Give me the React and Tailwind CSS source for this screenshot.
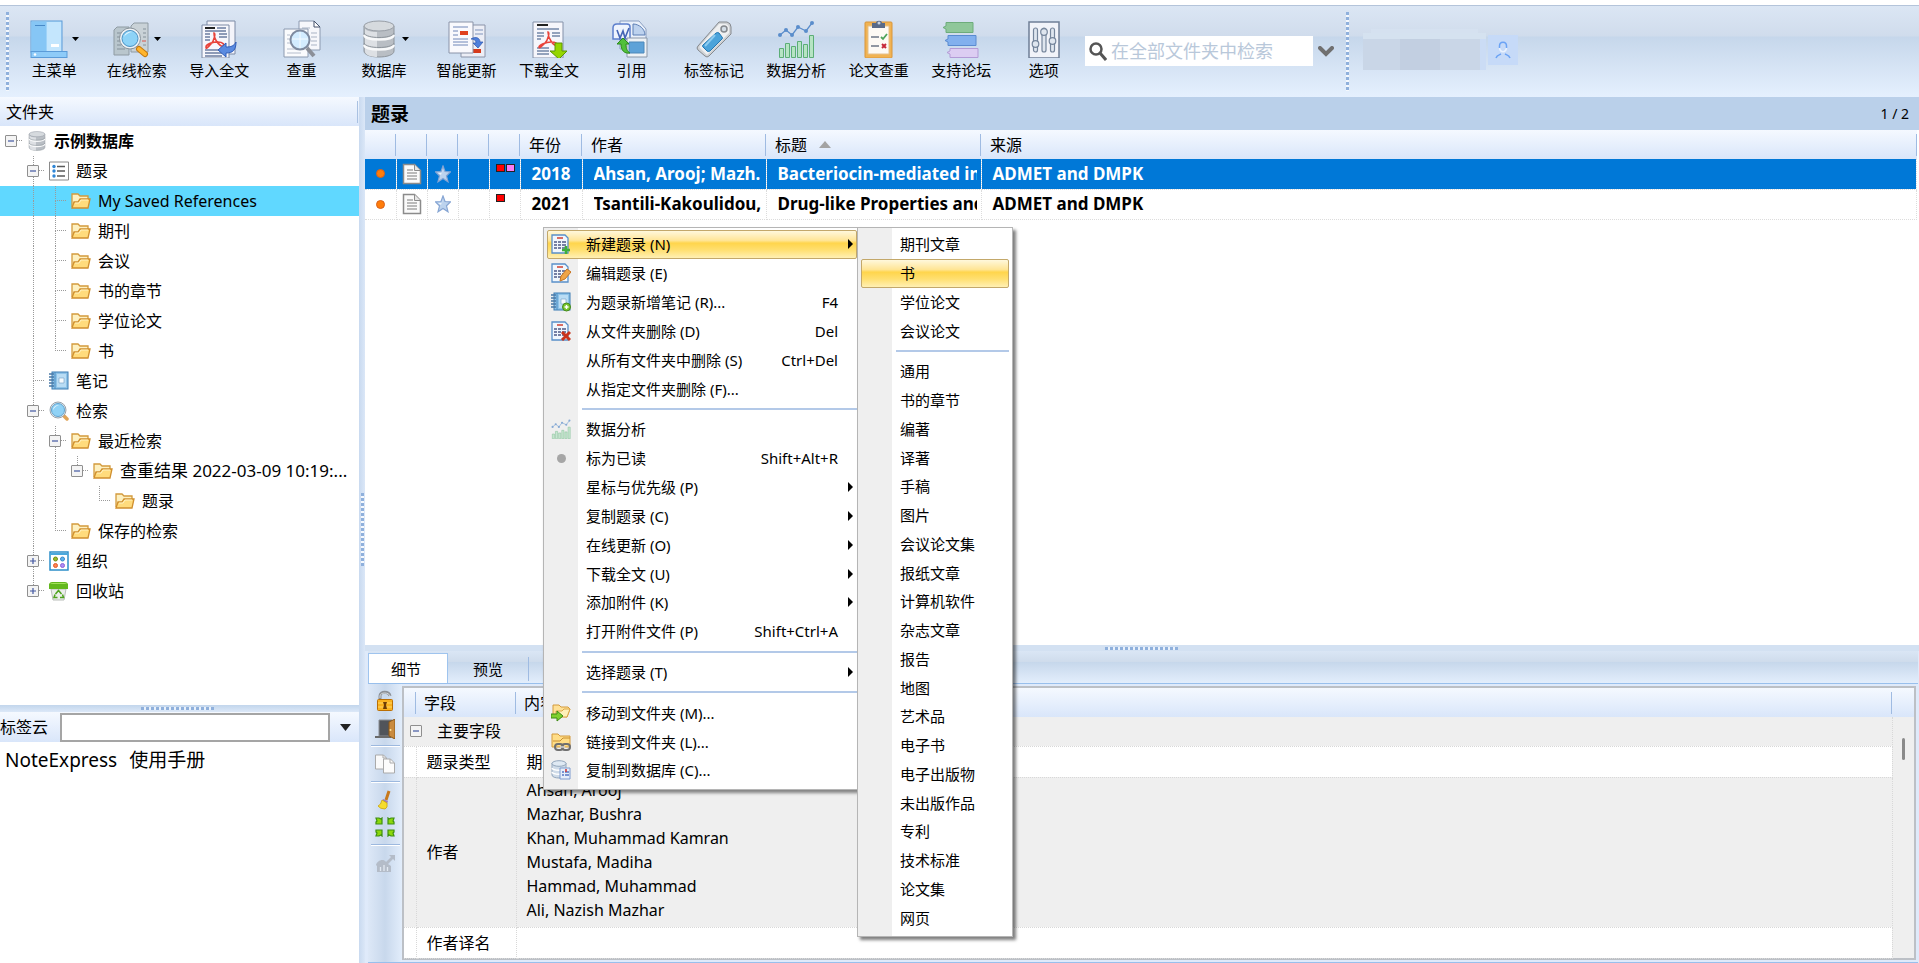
import React, { useState } from 'react';
import clsx from 'clsx';

/* ---------- toolbar icons (38 x 38) ---------- */

const MainMenuIcon = () => (
  <svg width="38" height="38" viewBox="0 0 38 38">
    <rect x="1" y="1" width="31" height="31" fill="#b9e0fb" stroke="#5b9bd8" />
    <rect x="1.500" y="1.500" width="15" height="30" fill="#86c6f5" />
    <rect x="17" y="2" width="14" height="29" fill="#c4e6fd" />
    <path d="M5 5.500h10" stroke="#4889c7" />
    <rect x="21" y="24" width="8" height="3" fill="#fff" />
    <rect x="1" y="31.500" width="36" height="6" fill="#8ecbf8" stroke="#5b9bd8" />
    <circle cx="5" cy="34.500" r="1.300" fill="#fff" />
  </svg>
);

const OnlineSearchIcon = () => (
  <svg width="38" height="38" viewBox="0 0 38 38">
    <path d="M2 10l3-3h12v28H2z" fill="#b9c6cd" stroke="#8f9ba3" />
    <path d="M19 6l3-3h14v29H19z" fill="#c9d2d7" stroke="#8f9ba3" />
    <path d="M5 13h4M5 17h3M5 21h3M5 25h4M5 29h8M31 9h3M31 13h3M31 17h3M31 25h3" stroke="#84919a" />
    <path d="M30 21h4" stroke="#d9534a" />
    <circle cx="18" cy="18.500" r="10.500" fill="#eef2f5" stroke="#8a949c" />
    <circle cx="18" cy="18.500" r="8" fill="#8dd3f7" stroke="#4b91c3" />
    <path d="M12 17a7 7 0 0 1 9-5c-4 0-7 2-9 5z" fill="#fff" opacity=".8" />
    <path d="M27 29l6 5" stroke="#c47a10" strokeWidth="6" strokeLinecap="round" />
    <path d="M27 29l6 5" stroke="#ffb52e" strokeWidth="4" strokeLinecap="round" />
  </svg>
);

const ImportPdfIcon = () => (
  <svg width="38" height="38" viewBox="0 0 38 38">
    <path d="M7 1h28v33H7z" fill="#f4f4fa" stroke="#7c8aa5" />
    <path d="M2 5h27v33H2z" fill="#f7f7fc" stroke="#7c8aa5" />
    <path d="M5 8h10" stroke="#222" strokeWidth="2" />
    <path d="M17 8h9M5 14h5M5 17h5M5 20h5M19 14h8M19 17h8M5 33h17M5 36h17M5 30h13M5 11h21" stroke="#6c7da0" strokeWidth="1.300" />
    <path d="M14 13c2 0 0 8-3 11s-5 6-5 3 7-5 12-5 7 3 5 4-9-5-9-13z" fill="none" stroke="#e8433a" strokeWidth="1.600" />
    <path d="M18 30l8-7v4c5 0 8-1 10-5 0 8-3 11-10 11v4z" fill="#5b8be0" stroke="#2f5cb8" />
  </svg>
);

const CheckDupIcon = () => (
  <svg width="38" height="38" viewBox="0 0 38 38">
    <path d="M16 1h15l6 6v23H16z" fill="#f6f7fb" stroke="#8c9ab0" />
    <path d="M31 1v6h6z" fill="#fff" stroke="#44516b" />
    <path d="M19 8h8M28 13h6M28 17h6M28 21h6M28 25h6" stroke="#a9b3c4" />
    <path d="M1 9h24v28H1z" fill="#fafbfd" stroke="#8c9ab0" />
    <path d="M4 15h3M4 19h3M4 23h3M4 29h14M4 33h14" stroke="#b5bdcc" />
    <circle cx="17" cy="20" r="9.500" fill="#d3ecff" stroke="#7f8ba0" strokeWidth="2" />
    <path d="M17 12v16M9 19h16" stroke="#fff" opacity=".8" />
    <path d="M24 28l7 8" stroke="#8b8f98" strokeWidth="4" />
  </svg>
);

const DatabaseIcon = ({ size = 38 }) => (
  <svg width={size} height={size} viewBox="0 0 38 38">
    <path d="M4 6v25c0 8 30 8 30 0V6z" fill="#b9bec4" stroke="#8e959c" />
    <path d="M5 8v23c0 6 12 6 12 6V12C9 12 5 10 5 8z" fill="#dde0e4" />
    <path d="M4 15c2 6 28 6 30 0M4 25c2 6 28 6 30 0" fill="none" stroke="#f8f9fa" strokeWidth="2.500" />
    <path d="M4 13c2 6 28 6 30 0M4 23c2 6 28 6 30 0" fill="none" stroke="#8e959c" />
    <ellipse cx="19" cy="6" rx="15" ry="5" fill="#d6dade" stroke="#989ea6" />
  </svg>
);

const SmartUpdateIcon = () => (
  <svg width="38" height="38" viewBox="0 0 38 38">
    <path d="M13 5h24v32H13z" fill="#eceef6" stroke="#8a93a8" />
    <path d="M27 10h8M27 14h8M16 30h8" stroke="#7f93bb" />
    <path d="M25 29h8v4h-8z" fill="#d63a1c" />
    <path d="M1 2h24v31H1z" fill="#f9f9fd" stroke="#8a93a8" />
    <path d="M5 7h15M5 11h5M5 15h5M5 19h15M5 22h15M5 25h15" stroke="#6e86b8" />
    <path d="M12 11h8v4h-8z" fill="#e0401e" />
    <path d="M23 19c5-3 9-1 9 3h3l-5 6-5-5h3c0-3-2-4-5-4z" fill="#4f80dc" stroke="#2b55ad" strokeWidth=".700" />
  </svg>
);

const DownloadPdfIcon = () => (
  <svg width="38" height="38" viewBox="0 0 38 38">
    <path d="M3 2h30v36H3z" fill="#f6f6fb" stroke="#8390a8" />
    <path d="M7 5h11" stroke="#222" strokeWidth="2" />
    <path d="M7 9h22M7 13h7M7 16h7M22 13h8M22 16h8M7 19h4M7 31h12M7 34h12M7 28h12" stroke="#7386a8" strokeWidth="1.300" />
    <path d="M18 12c2 0 0 8-3 11s-6 6-6 4 7-5 12-5 7 2 5 3-8-6-8-13z" fill="none" stroke="#e8433a" strokeWidth="1.600" />
    <path d="M25 23h7v8h5l-8 8-9-8h5z" fill="#95d600" stroke="#5b9406" />
  </svg>
);

const CiteIcon = () => (
  <svg width="38" height="38" viewBox="0 0 38 38">
    <path d="M8 1h19l7 8v20H8z" fill="#e9f0fa" stroke="#8b9fc2" />
    <path d="M21 4v11h12c0-6-6-11-12-11z" fill="#bdd2ee" stroke="#5d7fb4" />
    <path d="M1 8q0-4 4-4h10q3 0 3 3v12H1z" fill="#eff4fd" stroke="#5d7fcc" strokeWidth="1.500" />
    <path d="M5 10l3 8 3-7 2 7 4-10" fill="none" stroke="#4565b5" strokeWidth="1.600" />
    <path d="M15 18h20v19H15z" fill="#eef2f6" stroke="#8a97a8" />
    <path d="M17 22h15v11H17z" fill="#5ea2d8" stroke="#4d88ba" />
    <path d="M5 24l6-6 6 6h-3c0 5 1 7 4 9-6 1-9-3-9-9z" fill="#52c03a" stroke="#2d8c1c" />
  </svg>
);

const TagIcon = () => (
  <svg width="38" height="38" viewBox="0 0 38 38">
    <path d="M24 2h8q4 1 4 5v7L14 36q-2 2-4 0l-7-6q-2-2 0-4z" fill="#cfd2d5" stroke="#85898e" />
    <path d="M24 4h7q3 1 3 4v5L13 34q-1 1-2 0l-6-6q-1-1 0-2z" fill="#eff0f1" />
    <circle cx="29" cy="9" r="3" fill="#d3dde6" stroke="#85898e" strokeWidth="1.500" />
    <path d="M21 13q2-1 3 0l3 4q1 1 0 2L15 31q-2 1-3 0l-4-4q-1-1 0-2z" fill="#4ba3da" stroke="#2378b4" />
    <path d="M20 15L10 26" stroke="#8dccf0" strokeWidth="2" />
  </svg>
);

const AnalysisIcon = ({ size = 38 }) => (
  <svg width={size} height={size} viewBox="0 0 38 38">
    <path d="M3 15l6-5 6 5 6-8 8 4 6-8" fill="none" stroke="#5a8dcb" strokeWidth="1.300" />
    <g fill="#5a8dcb">
      <circle cx="3" cy="15" r="2" /><circle cx="9" cy="10" r="2" /><circle cx="15" cy="15" r="2" />
      <circle cx="21" cy="7" r="2" /><circle cx="29" cy="11" r="2" /><circle cx="35" cy="3" r="2" />
    </g>
    <g fill="#b6e4c3" stroke="#5cae77">
      <path d="M2.500 28.500h4v9h-4zM8.500 23.500h4v14h-4zM14.500 26.500h4v11h-4zM20.500 21.500h4v16h-4zM26.500 24.500h4v13h-4zM32.500 15.500h4v22h-4z" />
    </g>
  </svg>
);

const ClipboardIcon = () => (
  <svg width="38" height="38" viewBox="0 0 38 38">
    <rect x="5" y="2" width="27" height="36" rx="1" fill="#f1b352" stroke="#d8953a" />
    <path d="M8 6h21v28H8z" fill="#fdfaf5" stroke="#e5c08a" />
    <path d="M12 3h4c0-3 6-3 6 0h3v5H12z" fill="#5a6b88" />
    <circle cx="19" cy="3" r="1.500" fill="#c9d3e2" />
    <path d="M11 17h8M11 26h8" stroke="#6c7787" strokeWidth="1.500" />
    <path d="M21 17l2 2 4-5" fill="none" stroke="#4da35c" strokeWidth="1.800" />
    <path d="M22 24l4 4M26 24l-4 4" stroke="#c6283a" strokeWidth="2" />
  </svg>
);

const ForumIcon = () => (
  <svg width="38" height="38" viewBox="0 0 38 38">
    <path d="M4 2.500h27v10H4V9L1 7.500 4 6z" fill="#8fc79a" stroke="#6dac7b" />
    <path d="M6 15.500h28v10H6V22l-3-1.500L6 19z" fill="#82b0ee" stroke="#5a8bd0" />
    <path d="M8 28.500h28v9H8V34l-3-1.500L8 31z" fill="#dccdf2" stroke="#b39bd6" />
  </svg>
);

const OptionsIcon = () => (
  <svg width="38" height="38" viewBox="0 0 38 38">
    <path d="M4 2h30v36H4z" fill="#f1f3f9" stroke="#6f7f96" strokeWidth="1.500" />
    <g fill="#dfe6ef" stroke="#76869c" strokeWidth="1.200">
      <rect x="8.500" y="8" width="4" height="24" rx="2" />
      <rect x="17" y="8" width="4" height="24" rx="2" />
      <rect x="25.500" y="8" width="4" height="24" rx="2" />
      <circle cx="10.500" cy="24" r="3.300" /><circle cx="19" cy="12" r="3.300" /><circle cx="27.500" cy="21" r="3.300" />
    </g>
  </svg>
);

/* ---------- small icons (20 x 20) ---------- */

const FolderIcon = () => (
  <svg width="20" height="18" viewBox="0 0 20 18">
    <path d="M1 15V2h6l2 2h8v4" fill="#fdf0c0" stroke="#d39a3c" strokeWidth="1.300" />
    <path d="M1 16l2-6h4l2-3h10l-2 9z" fill="#ffdb7c" stroke="#d08f2e" strokeWidth="1.300" />
    <path d="M4 11h4l2-3h7" fill="none" stroke="#fff3c4" />
  </svg>
);

const ListIcon = () => (
  <svg width="20" height="20" viewBox="0 0 20 20">
    <path d="M.5 1h19v18H.5z" fill="#fff" stroke="#8a8a8a" />
    <path d="M8 5.500h8M8 10h8M8 15h8" stroke="#5a5a5a" strokeWidth="1.300" />
    <circle cx="5" cy="5.500" r="1.700" fill="#2f86d6" /><circle cx="5" cy="10" r="1.700" fill="#2f86d6" /><circle cx="5" cy="15" r="1.700" fill="#2f86d6" />
  </svg>
);

const NotebookIcon = ({ add }) => (
  <svg width="20" height="20" viewBox="0 0 20 20">
    <rect x="3" y="1" width="16" height="17" fill="#8fc3e8" stroke="#3d7cb3" />
    <path d="M6 1v17" stroke="#4b8dc2" />
    <path d="M0 3h5M0 6h5M0 9h5M0 12h5M0 15h5" stroke="#4a7aa6" strokeWidth="1.300" />
    <path d="M8 3h9v13H8z" fill="#b9dcf4" />
    <path d="M10 7h5v5h-5z" fill="#f6fafd" stroke="#6f9fc6" strokeWidth=".600" />
    {add && <circle cx="15.500" cy="15" r="4" fill="#79c62e" stroke="#44891a" />}
    {add && <path d="M13.500 15h4M15.500 13v4" stroke="#fff" strokeWidth="1.400" />}
  </svg>
);

const SearchFolderIcon = () => (
  <svg width="20" height="20" viewBox="0 0 20 20">
    <path d="M14 14l4 4" stroke="#e0a458" strokeWidth="3.500" strokeLinecap="round" />
    <circle cx="9" cy="9" r="8" fill="#e3e8ec" stroke="#98a2ab" />
    <circle cx="9" cy="9" r="6.500" fill="#8fd2f6" stroke="#5fa3cf" />
    <path d="M4 9c0-3 3-5 6-5-3 1-4 2-6 5z" fill="#fff" opacity=".8" />
  </svg>
);

const GroupIcon = () => (
  <svg width="20" height="20" viewBox="0 0 20 20">
    <path d="M1 1h18v18H1z" fill="#fff" stroke="#2d8fc9" strokeWidth="1.500" />
    <path d="M1 3h18" stroke="#4aa8dc" strokeWidth="2" />
    <circle cx="6.500" cy="8" r="2" fill="#9bbb2c" stroke="#6f8c14" /><circle cx="13.500" cy="8" r="2" fill="#5cb2ee" stroke="#3a88c8" />
    <circle cx="6.500" cy="14.500" r="2" fill="#ff8150" stroke="#dd5a2a" /><circle cx="13.500" cy="14.500" r="2" fill="#b08cf5" stroke="#8a64d8" />
  </svg>
);

const TrashIcon = () => (
  <svg width="20" height="20" viewBox="0 0 20 20">
    <path d="M2 8h15l-2 11H4z" fill="#eceeec" stroke="#b9bdb9" />
    <path d="M0 8V3q1-2 3-2h13q2 0 3 2v5z" fill="#63b81e" />
    <path d="M1 3q1-1 3-1h11q2 0 3 1z" fill="#a3e05c" />
    <path d="M6.500 13l3-3.500L12.500 13M6 13.500l-1 3h3.500M13.500 13.500l1 3H11" fill="none" stroke="#4fa31d" strokeWidth="1.500" />
  </svg>
);

const DocIcon = () => (
  <svg width="20" height="22" viewBox="0 0 20 22">
    <path d="M1.500 1.500h11l6 6v13h-17z" fill="#fafafa" stroke="#8b8b8b" strokeWidth="1.500" />
    <path d="M5 7h6M5 10h10M5 13h10M5 16h10" stroke="#a5a5a5" strokeWidth="1.300" />
    <path d="M12.500 1.500v6h6" fill="#e5e5e5" stroke="#8b8b8b" />
  </svg>
);

const StarIcon = () => (
  <svg width="16" height="18" viewBox="0 0 16 18">
    <path d="M8 1l2 5.500 5.500.300-4 4 1.500 6L8 13.500 3 16.800l1.500-6-4-4L6 6.500z" fill="#bcd3ee" stroke="#86a5d3" strokeWidth="1.200" />
    <path d="M8 4l-1 4-4 0 3 2z" fill="#fff" opacity=".7" />
  </svg>
);

const RefIcon = ({ kind }) => (
  <svg width="20" height="20" viewBox="0 0 20 20">
    <path d="M1 1h13l3 3v15H1z" fill="#f1f7fd" stroke="#5990c9" strokeWidth="1.300" />
    <path d="M6 4h6" stroke="#d44a3c" strokeWidth="1.600" />
    <path d="M3 8h3M7 8h3M11 8h4M3 11h3M7 11h3M11 11h4M3 14h3M7 14h3M11 14h3" stroke="#4d5a86" strokeWidth="1.600" />
    {kind === 'add' && <path d="M15 12v8M11 16h8" stroke="#3faf3a" strokeWidth="2.600" />}
    {kind === 'edit' && <path d="M9 18l1-5 6-7 4 3-6 7z" fill="#f0a548" stroke="#c77422" />}
    {kind === 'del' && <path d="M11 11l8 8M19 11l-8 8" stroke="#c9341c" strokeWidth="3" />}
  </svg>
);

const MoveFolderIcon = () => (
  <svg width="20" height="20" viewBox="0 0 20 20">
    <path d="M2 13V2h6l2 2h7l2 2-3 8z" fill="#ffe196" stroke="#d39a3c" />
    <path d="M5 8h6l2-2h6l-3 8H5z" fill="#fff0b8" stroke="#dba648" />
    <path d="M0 11h6V8l6 5-6 5v-3H0z" fill="#7ed02e" stroke="#3c8a12" />
  </svg>
);

const LinkFolderIcon = () => (
  <svg width="20" height="20" viewBox="0 0 20 20">
    <path d="M1 15V2h6l2 2h10v11z" fill="#ffdd86" stroke="#d39a3c" />
    <path d="M2 9h7l3-3h7" fill="none" stroke="#c98f30" />
    <rect x="4" y="12" width="8" height="6" rx="3" fill="none" stroke="#6f6f6f" strokeWidth="2" />
    <rect x="11" y="12" width="8" height="6" rx="3" fill="none" stroke="#6f6f6f" strokeWidth="2" />
    <path d="M9 15h5" stroke="#d5d5d5" strokeWidth="1.500" />
  </svg>
);

const CopyDbIcon = () => (
  <svg width="20" height="20" viewBox="0 0 20 20">
    <path d="M1 3v12c0 4 14 4 14 0V3z" fill="#cfdbe8" stroke="#93a7bd" />
    <path d="M1 8c1 3 13 3 14 0M1 12c1 3 13 3 14 0" fill="none" stroke="#fff" strokeWidth="1.500" />
    <ellipse cx="8" cy="3.500" rx="7" ry="2.800" fill="#dfe9f3" stroke="#93a7bd" />
    <path d="M9 8h10v11H9z" fill="#e6eefa" stroke="#7f9cd0" />
    <path d="M11 12h2M14 12h4M11 15h2M14 15h4" stroke="#5677c4" strokeWidth="1.600" />
    <path d="M15 9v3" stroke="#d03a3a" strokeWidth="1.600" />
  </svg>
);

/* ---------- detail side bar icons (20 x 20) ---------- */

const LockIcon = () => (
  <svg width="20" height="22" viewBox="0 0 20 22">
    <path d="M5 9V6c0-5 9-5 10 0" fill="none" stroke="#8b9097" strokeWidth="3" />
    <path d="M5 8V6c0-4 9-4 10 0" fill="none" stroke="#d6dade" />
    <rect x="2.500" y="9.500" width="15" height="11" rx="1" fill="#f9b11e" stroke="#ba6f05" />
    <path d="M3 13h14M3 17h14" stroke="#ffd765" />
    <path d="M8 12h4l-1 3 1 4H8l1-4z" fill="#6d3c05" />
  </svg>
);

const DoorIcon = () => (
  <svg width="20" height="20" viewBox="0 0 20 20">
    <path d="M4 1h13v16H4z" fill="#50545a" stroke="#8a8d92" />
    <path d="M0 18h16" stroke="#6a6a6a" strokeWidth="2" />
    <path d="M14 3l6-3v20l-6-3z" fill="#c98b3f" stroke="#8a5717" />
    <circle cx="15.500" cy="11" r="1" fill="#ffe49a" />
  </svg>
);

const CopyIcon = () => (
  <svg width="20" height="20" viewBox="0 0 20 20">
    <path d="M.500 1h8l3 3v11H.5z" fill="#fafafa" stroke="#aaa" />
    <path d="M8.500 5h7l4 4v10h-11z" fill="#fcfcfc" stroke="#aaa" />
    <path d="M8 1v3h3M15 5v4h4" fill="none" stroke="#aaa" />
  </svg>
);

const BroomIcon = () => (
  <svg width="20" height="20" viewBox="0 0 20 20">
    <path d="M14 1l-3 9" stroke="#c8791c" strokeWidth="3" />
    <path d="M8 9l5 2-1 3-5-2z" fill="#9c7bc0" />
    <path d="M7 10l5 3q1 5-2 6-5 0-7-3 3-1 4-6z" fill="#f6dc2e" stroke="#caa50c" strokeWidth=".800" />
  </svg>
);

const CompressIcon = () => (
  <svg width="20" height="20" viewBox="0 0 20 20">
    <g fill="#8bd80c" stroke="#3f8f12" strokeWidth="1.200">
      <path d="M1 1h3l2 1 1-1v6H1V5l1-1zM19 1h-3l-2 1-1-1v6h6V5l-1-1zM1 19h3l2-1 1 1v-6H1v2l1 1zM19 19h-3l-2-1-1 1v-6h6v2l-1 1z" />
    </g>
  </svg>
);

const TrendIcon = () => (
  <svg width="20" height="20" viewBox="0 0 20 20">
    <path d="M1 12c1-4 7-7 10-3l5-5-2-2h6v6l-2-2-5 5 3 2v6H2v-6z" fill="#b4bcc8" />
    <path d="M5.500 14v4M9 12v6M12.500 14v4" stroke="#e2e9f2" strokeWidth="1.300" />
  </svg>
);

const Caret = () => (
  <svg width="6" height="12" viewBox="0 0 6 12">
    <path d="M0 1l5 5-5 5z" fill="#000" />
  </svg>
);

/* ---------- data ---------- */

const tools = [
  { label: '主菜单', icon: <MainMenuIcon />, drop: true },
  { label: '在线检索', icon: <OnlineSearchIcon />, drop: true },
  { label: '导入全文', icon: <ImportPdfIcon /> },
  { label: '查重', icon: <CheckDupIcon /> },
  { label: '数据库', icon: <DatabaseIcon />, drop: true },
  { label: '智能更新', icon: <SmartUpdateIcon /> },
  { label: '下载全文', icon: <DownloadPdfIcon /> },
  { label: '引用', icon: <CiteIcon /> },
  { label: '标签标记', icon: <TagIcon /> },
  { label: '数据分析', icon: <AnalysisIcon /> },
  { label: '论文查重', icon: <ClipboardIcon /> },
  { label: '支持论坛', icon: <ForumIcon /> },
  { label: '选项', icon: <OptionsIcon /> },
];

// guides, one letter per level: v line, n blank, t branch, l last branch, h stub
const tree = [
  { label: '示例数据库', icon: <DatabaseIcon size={20} />, guides: 'h', toggle: '-', bold: true },
  { label: '题录', icon: <ListIcon />, guides: 'nt', toggle: '-' },
  { label: 'My Saved References', icon: <FolderIcon />, guides: 'nvt' },
  { label: '期刊', icon: <FolderIcon />, guides: 'nvt' },
  { label: '会议', icon: <FolderIcon />, guides: 'nvt' },
  { label: '书的章节', icon: <FolderIcon />, guides: 'nvt' },
  { label: '学位论文', icon: <FolderIcon />, guides: 'nvt' },
  { label: '书', icon: <FolderIcon />, guides: 'nvl' },
  { label: '笔记', icon: <NotebookIcon />, guides: 'nt' },
  { label: '检索', icon: <SearchFolderIcon />, guides: 'nt', toggle: '-' },
  { label: '最近检索', icon: <FolderIcon />, guides: 'nvt', toggle: '-' },
  { label: '查重结果 2022-03-09 10:19:...', icon: <FolderIcon />, guides: 'nvvl', toggle: '-', large: true },
  { label: '题录', icon: <FolderIcon />, guides: 'nvvnl' },
  { label: '保存的检索', icon: <FolderIcon />, guides: 'nvl' },
  { label: '组织', icon: <GroupIcon />, guides: 'nt', toggle: '+' },
  { label: '回收站', icon: <TrashIcon />, guides: 'nl', toggle: '+' },
];

const refs = [
  { year: '2018', author: 'Ahsan, Arooj; Mazh.', title: 'Bacteriocin-mediated in', source: 'ADMET and DMPK', tags: ['bg-[#ff0000]', 'bg-[#f77cf7]'] },
  { year: '2021', author: 'Tsantili-Kakoulidou,', title: 'Drug-like Properties and', source: 'ADMET and DMPK', tags: ['bg-[#ff0000]'] },
];

const menu = [
  { label: '新建题录 (N)', icon: <RefIcon kind="add" />, sub: true },
  { label: '编辑题录 (E)', icon: <RefIcon kind="edit" /> },
  { label: '为题录新增笔记 (R)...', icon: <NotebookIcon add />, keys: 'F4' },
  { label: '从文件夹删除 (D)', icon: <RefIcon kind="del" />, keys: 'Del' },
  { label: '从所有文件夹中删除 (S)', keys: 'Ctrl+Del' },
  { label: '从指定文件夹删除 (F)...' },
  null,
  { label: '数据分析', icon: <span className="opacity-70"><AnalysisIcon size={20} /></span> },
  { label: '标为已读', icon: <span className="size-[9px] rounded-full bg-[#a6a6a6]" />, keys: 'Shift+Alt+R' },
  { label: '星标与优先级 (P)', sub: true },
  { label: '复制题录 (C)', sub: true },
  { label: '在线更新 (O)', sub: true },
  { label: '下载全文 (U)', sub: true },
  { label: '添加附件 (K)', sub: true },
  { label: '打开附件文件 (P)', keys: 'Shift+Ctrl+A' },
  null,
  { label: '选择题录 (T)', sub: true },
  null,
  { label: '移动到文件夹 (M)...', icon: <MoveFolderIcon /> },
  { label: '链接到文件夹 (L)...', icon: <LinkFolderIcon /> },
  { label: '复制到数据库 (C)...', icon: <CopyDbIcon /> },
];

const subMenu = [
  '期刊文章', '书', '学位论文', '会议论文', null, '通用', '书的章节', '编著', '译著', '手稿', '图片',
  '会议论文集', '报纸文章', '计算机软件', '杂志文章', '报告', '地图', '艺术品', '电子书', '电子出版物',
  '未出版作品', '专利', '技术标准', '论文集', '网页',
].map((label) => (label ? { label } : null));

const authors = ['Ahsan, Arooj', 'Mazhar, Bushra', 'Khan, Muhammad Kamran', 'Mustafa, Madiha', 'Hammad, Muhammad', 'Ali, Nazish Mazhar'];

const headBg = 'bg-linear-to-b from-[#f5f9ff] to-[#d9e6fa]';

/* ---------- pieces ---------- */

function Grip({ vertical }) {
  return vertical ? (
    <span className="w-[3px] bg-[repeating-linear-gradient(180deg,#8fb0dc_0_3px,#f4f8fd_3px_5px)]" />
  ) : (
    <span className="h-[3px] w-[73px] bg-[repeating-linear-gradient(90deg,#8fb0dc_0_3px,#e9f1fb_3px_5px)]" />
  );
}

function Toggle({ sign }) {
  return (
    <button aria-label="toggle" className="flex size-[12px] items-center justify-center rounded-[1px] border border-[#8f8f8f] bg-[#f4f4f4]">
      <svg width="8" height="8" viewBox="0 0 8 8">
        <path d={sign === '+' ? 'M1 4h6M4 1v6' : 'M1 4h6'} stroke="#4257a0" strokeWidth="1.200" />
      </svg>
    </button>
  );
}

function Guide({ kind, sign }) {
  return (
    <span className="relative flex h-full w-[22px] shrink-0 flex-col pl-[11px]">
      <span className={clsx('h-1/2 border-dotted border-[#9a9a9a]', 'vtl'.includes(kind) && 'border-l', 'tlh'.includes(kind) && 'border-b')} />
      <span className={clsx('h-1/2 border-dotted border-[#9a9a9a]', 'vt'.includes(kind) && 'border-l')} />
      {sign && (
        <span className="absolute inset-0 flex items-center justify-center">
          <Toggle sign={sign} />
        </span>
      )}
    </span>
  );
}

function Toolbar() {
  return (
    <header className="flex h-[92px] shrink-0 border-t border-[#b4c4da] bg-[linear-gradient(180deg,#dbe6f4_0%,#d0dcec_33%,#c6d7eb_34%,#e5f0fe_100%)]">
      <div className="flex py-[6px] pl-[6px]">
        <Grip vertical />
      </div>
      <div className="ml-1 grid w-[1072px] shrink-0 grid-cols-13">
        {tools.map((t) => (
          <button key={t.label} className="flex flex-col items-center pt-[14px] text-[15px] leading-[24px] whitespace-nowrap">
            <span className="flex h-[38px] items-center gap-1">
              {t.icon}
              {t.drop && (
                <svg width="7" height="4" viewBox="0 0 7 4"><path d="M0 0h7L3.500 4z" /></svg>
              )}
            </span>
            {t.label}
          </button>
        ))}
      </div>
      <div className="mt-[30px] flex h-[30px] w-[228px] shrink-0 items-center bg-white pl-1">
        <svg width="18" height="19" viewBox="0 0 18 19" className="shrink-0">
          <circle cx="7" cy="7" r="5.500" fill="none" stroke="#555" strokeWidth="2.500" />
          <path d="M11 11l6 7" stroke="#555" strokeWidth="3" />
        </svg>
        <input aria-label="search" placeholder="在全部文件夹中检索" className="ml-1 min-w-0 flex-1 text-[18px] outline-none placeholder:text-[#b9c8da]" />
      </div>
      <button aria-label="search options" className="mt-[31px] ml-[5px] flex h-[30px] items-center">
        <svg width="16" height="12" viewBox="0 0 16 12"><path d="M2 2l6 6 6-6" fill="none" stroke="#707070" strokeWidth="4" strokeLinecap="round" /></svg>
      </button>
      <div className="ml-[12px] flex py-[6px]">
        <Grip vertical />
      </div>
      <div className="mt-[23px] ml-[14px] w-[123px]">
        <div className="mx-2 h-[4px] bg-[#d5e1f0]" />
        <div className="h-[6px] bg-[#d5e2f0]" />
        <div className="flex h-[31px]">
          <span className="w-[37px] bg-[#c9d6e7]" />
          <span className="w-[40px] bg-[#c2cfe1]" />
          <span className="w-[40px] bg-[#c9d6e7]" />
          <span className="w-[6px] bg-[#cbdcf5]" />
        </div>
      </div>
      <button aria-label="account" className="mt-[29px] ml-[2px] flex size-[30px] items-center justify-center bg-[#c6daf8]">
        <svg width="16" height="18" viewBox="0 0 16 18" fill="none" stroke="#6ba3f5" strokeWidth="1.500">
          <path d="M4.500 7V5c0-5 7-5 7 0v2" />
          <path d="M4.500 7c1 5 6 5 7 0" stroke="#eaf2ff" />
          <path d="M1 17c1-3 3-3 5-4M15 17c-1-3-3-3-5-4" />
        </svg>
      </button>
    </header>
  );
}

function Sidebar({ selected, onSelect }) {
  return (
    <aside className="flex w-[359px] shrink-0 flex-col overflow-hidden bg-white">
      <div className={clsx('flex h-[29px] shrink-0 items-center justify-between pr-px pl-[6px]', headBg)}>
        <span>文件夹</span>
        <span className="h-[22px] w-px bg-[#a9c1e2]" />
      </div>
      <ul className="flex-1">
        {tree.map((n, i) => (
          <li key={i} onClick={() => onSelect(i)} className={clsx('flex h-[30px] items-center whitespace-nowrap', i === selected && 'bg-[#60d8ff]')}>
            {n.guides.split('').map((g, k) => (
              <Guide key={k} kind={g} sign={k === n.guides.length - 1 ? n.toggle : null} />
            ))}
            <span className="ml-[5px] shrink-0">{n.icon}</span>
            <span className={clsx('ml-[7px]', n.bold && 'font-bold', n.large && 'text-[17px]')}>{n.label}</span>
          </li>
        ))}
      </ul>
      <div className="flex h-[7px] shrink-0 items-center justify-center bg-linear-to-b from-[#c2d6ec] to-[#dce8f8] pr-1">
        <Grip />
      </div>
      <div className={clsx('flex h-[30px] shrink-0 items-center', headBg)}>
        <label htmlFor="tag" className="w-[60px] shrink-0">标签云</label>
        <input id="tag" className="h-[29px] w-[270px] border-2 border-[#a5a5a5] bg-white px-1 outline-none" />
        <button aria-label="tag list" className="ml-[10px]">
          <svg width="11" height="7" viewBox="0 0 11 7"><path d="M0 0h11L5.500 7z" fill="#222" /></svg>
        </button>
      </div>
      <div className="h-[221px] shrink-0 px-[5px] pt-[5px] text-[19px] leading-[26px]">
        <a href="#" className="mr-3">NoteExpress</a>
        <a href="#">使用手册</a>
      </div>
    </aside>
  );
}

function RefTable() {
  const heads = ['', '', '', '', '', '年份', '作者', '标题', '来源'];
  const cell = 'h-[30px] overflow-hidden border-r border-b border-dotted border-[#dcdcdc] p-0';
  return (
    <div className="min-h-0 flex-1 overflow-hidden bg-white pr-[2px]">
      <table className="w-full table-fixed border-collapse text-left">
        <colgroup>
          <col className="w-[31px]" /><col className="w-[31px]" /><col className="w-[31px]" /><col className="w-[31px]" /><col className="w-[31px]" />
          <col className="w-[62px]" /><col className="w-[184px]" /><col className="w-[215px]" /><col />
        </colgroup>
        <thead>
          <tr className={headBg}>
            {heads.map((h, i) => (
              <th key={i} className="h-[29px] p-0 font-normal">
                <div className="flex h-[22px] items-center gap-[12px] border-r border-[#9fbbe2] pl-[9px]">
                  {h}
                  {h === '标题' && <svg width="12" height="7" viewBox="0 0 12 7"><path d="M6 0l6 7H0z" fill="#a3a3a3" /></svg>}
                </div>
              </th>
            ))}
          </tr>
        </thead>
        <tbody>
          {refs.map((r, i) => (
            <tr key={r.year} className={clsx('text-[17px] font-bold whitespace-nowrap', i === 0 && 'bg-[#0078d7] text-white')}>
              <td className={cell}><span className="mx-auto block size-[9px] rounded-full border border-[#d9601a] bg-[#ff7d0a]" /></td>
              <td className={cell}><span className="flex justify-center"><DocIcon /></span></td>
              <td className={cell}><span className="flex justify-center"><StarIcon /></span></td>
              <td className={cell} />
              <td className={cell}>
                <span className="flex h-[22px] gap-px pt-px pl-[6px]">
                  {r.tags.map((t) => <span key={t} className={clsx('h-[8px] w-[9px] border border-[#222]', t)} />)}
                </span>
              </td>
              <td className={cell}><span className="pl-[11px]">{r.year}</span></td>
              <td className={cell}><div className="mr-[4px] ml-[11px] overflow-hidden">{r.author}</div></td>
              <td className={cell}><div className="mr-[4px] ml-[11px] overflow-hidden">{r.title}</div></td>
              <td className={cell}><span className="pl-[11px]">{r.source}</span></td>
            </tr>
          ))}
        </tbody>
      </table>
    </div>
  );
}

function SideTools() {
  const rule = <span className="h-[2px] w-[29px] border-t border-b border-t-[#9db9df] border-b-white" />;
  return (
    <div className="flex w-[34px] shrink-0 flex-col items-center bg-linear-to-r from-[#dde8f7] via-[#c8d8ec] to-[#e2edfb] pt-[6px]">
      <button aria-label="lock"><LockIcon /></button>
      <button aria-label="exit" className="mt-[7px] mb-[6px]"><DoorIcon /></button>
      {rule}
      <button aria-label="copy" className="my-[7px]"><CopyIcon /></button>
      {rule}
      <button aria-label="clean" className="mt-[7px]"><BroomIcon /></button>
      <button aria-label="collapse" className="my-[7px]"><CompressIcon /></button>
      {rule}
      <button aria-label="trend" className="mt-[7px]"><TrendIcon /></button>
    </div>
  );
}

function Detail() {
  const line = 'border-dotted border-[#d8d8d8]';
  return (
    <section className="flex h-[318px] shrink-0 flex-col bg-[#dfeafa] pr-px pl-[3px]">
      <div className="-mx-[3px] flex h-[6px] shrink-0 items-center justify-center bg-[#d3e1f2] pr-1">
        <Grip />
      </div>
      <div className="flex h-[33px] shrink-0 items-end border-b border-[#98bfec] bg-[linear-gradient(180deg,#dae6f5_0%,#cfdcec_33%,#c6d7eb_34%,#e3eefc_100%)] text-[15px]">
        <button className="h-[30px] w-[80px] border border-b-0 border-[#9fc4ee] bg-white pr-1">细节</button>
        <button className="mb-[2px] flex h-[24px] w-[81px] items-center justify-center border-r border-[#9fbbe2]">预览</button>
      </div>
      <div className="flex min-h-0 flex-1 border-b border-[#98bfec] pr-[2px]">
        <SideTools />
        <div className="my-[2px] flex min-w-0 flex-1 flex-col border-2 border-[#bcc0c6] bg-white">
          <table className="w-full table-fixed border-collapse text-left">
            <colgroup><col className="w-[12px]" /><col className="w-[100px]" /><col /><col className="w-[22px]" /></colgroup>
            <thead>
              <tr className={headBg}>
                <th className="h-[29px] p-0 font-normal"><div className="h-[22px] border-r border-[#9fbbe2]" /></th>
                <th className="p-0 font-normal"><div className="flex h-[22px] items-center border-r border-[#9fbbe2] pl-[8px]">字段</div></th>
                <th className="p-0 font-normal"><div className="flex h-[22px] items-center border-r border-[#9fbbe2] pl-[8px]">内容</div></th>
                <th className="p-0" />
              </tr>
            </thead>
            <tbody>
              <tr className="bg-[#efefef]">
                <td colSpan={3} className={clsx('h-[29px] border-r border-b p-0', line)}>
                  <div className="flex items-center gap-[15px] pl-[6px]"><Toggle sign="-" />主要字段</div>
                </td>
                <td rowSpan={4} className="p-0 align-top">
                  <div className="mx-auto mt-[21px] h-[22px] w-[3px] rounded-sm bg-[#8a8a8a]" />
                </td>
              </tr>
              <tr>
                <td className={clsx('border-r border-b', line)} />
                <td className={clsx('h-[31px] border-r border-b p-0 pl-[10px]', line)}>题录类型</td>
                <td className={clsx('border-r border-b p-0 pl-[10px]', line)}>期刊文章</td>
              </tr>
              <tr className="bg-[#efefef]">
                <td className={clsx('border-r border-b', line)} />
                <td className={clsx('h-[150px] border-r border-b p-0 pl-[10px]', line)}>作者</td>
                <td className={clsx('border-r border-b p-0 pb-1 pl-[10px]', line)}>
                  {authors.map((a) => <div key={a} className="h-[24px] leading-[24px]">{a}</div>)}
                </td>
              </tr>
              <tr>
                <td className={clsx('border-r border-b', line)} />
                <td className={clsx('h-[31px] border-r border-b p-0 pl-[10px]', line)}>作者译名</td>
                <td className={clsx('border-r border-b', line)} />
              </tr>
            </tbody>
          </table>
        </div>
      </div>
    </section>
  );
}

function MenuList({ items, active, className, onHover }) {
  return (
    <ul className={clsx('flex flex-col border border-[#b5b5b5] bg-[linear-gradient(90deg,#efefef_34px,#fff_34px)] pt-[2px] pb-[4px] text-[15px] leading-[22px]', className)}>
      {items.map((m, i) =>
        m === null ? (
          <li key={i} className="my-[5px] mr-[3px] ml-[38px] h-[2px] bg-[#b3c9e8]" />
        ) : (
          <li key={i} className="flex flex-1 px-[3px]">
            <button
              onMouseEnter={() => onHover(i)}
              className={clsx(
                'flex flex-1 items-center rounded-[2px] border pr-[2px] text-left whitespace-nowrap',
                i === active ? 'border-[#c3a86a] bg-[linear-gradient(180deg,#fff8dc_0%,#ffe596_35%,#ffd54c_45%,#ffdf70_70%,#fff0b4_100%)]' : 'border-transparent'
              )}
            >
              <span className="flex w-[26px] shrink-0 items-center justify-center">{m.icon}</span>
              <span className="ml-[12px] flex-1">{m.label}</span>
              <span>{m.keys}</span>
              <span className="flex w-[16px] justify-end">{m.sub && <Caret />}</span>
            </button>
          </li>
        )
      )}
    </ul>
  );
}

export default function App() {
  const [selected, setSelected] = useState(2);
  const [active, setActive] = useState(0);
  const [activeSub, setActiveSub] = useState(1);

  return (
    <div className="relative flex h-screen flex-col overflow-hidden bg-white pt-[5px] font-['Noto_Sans','Noto_Sans_CJK_SC',sans-serif] text-[16px] leading-[22px] text-black">
      <Toolbar />
      <main className="flex min-h-0 flex-1">
        <Sidebar selected={selected} onSelect={setSelected} />
        <div className="flex w-[6px] shrink-0 justify-center bg-linear-to-r from-[#c9daf0] to-[#dbe7f7]">
          <div className="mt-[396px] flex h-[73px]">
            <Grip vertical />
          </div>
        </div>
        <div className="flex min-w-0 flex-1 flex-col">
          <div className="flex h-[33px] shrink-0 items-center justify-between bg-[#bad0ea] pr-[10px] pl-[6px]">
            <h1 className="text-[19px] font-bold">题录</h1>
            <span className="text-[14px]">1 / 2</span>
          </div>
          <RefTable />
          <Detail />
        </div>
      </main>

      {/* context menu, the sub menu sits on its right edge */}
      <div className="absolute top-[227px] left-[543px] flex items-start">
        <MenuList items={menu} active={active} onHover={setActive} className="h-[563px] w-[318px] shadow-[2px_3px_3px_rgba(0,0,0,0.45)]" />
        <MenuList items={subMenu} active={activeSub} onHover={setActiveSub} className="relative -ml-[4px] h-[710px] w-[156px] shadow-[3px_3px_3px_rgba(0,0,0,0.5)]" />
      </div>
    </div>
  );
}
